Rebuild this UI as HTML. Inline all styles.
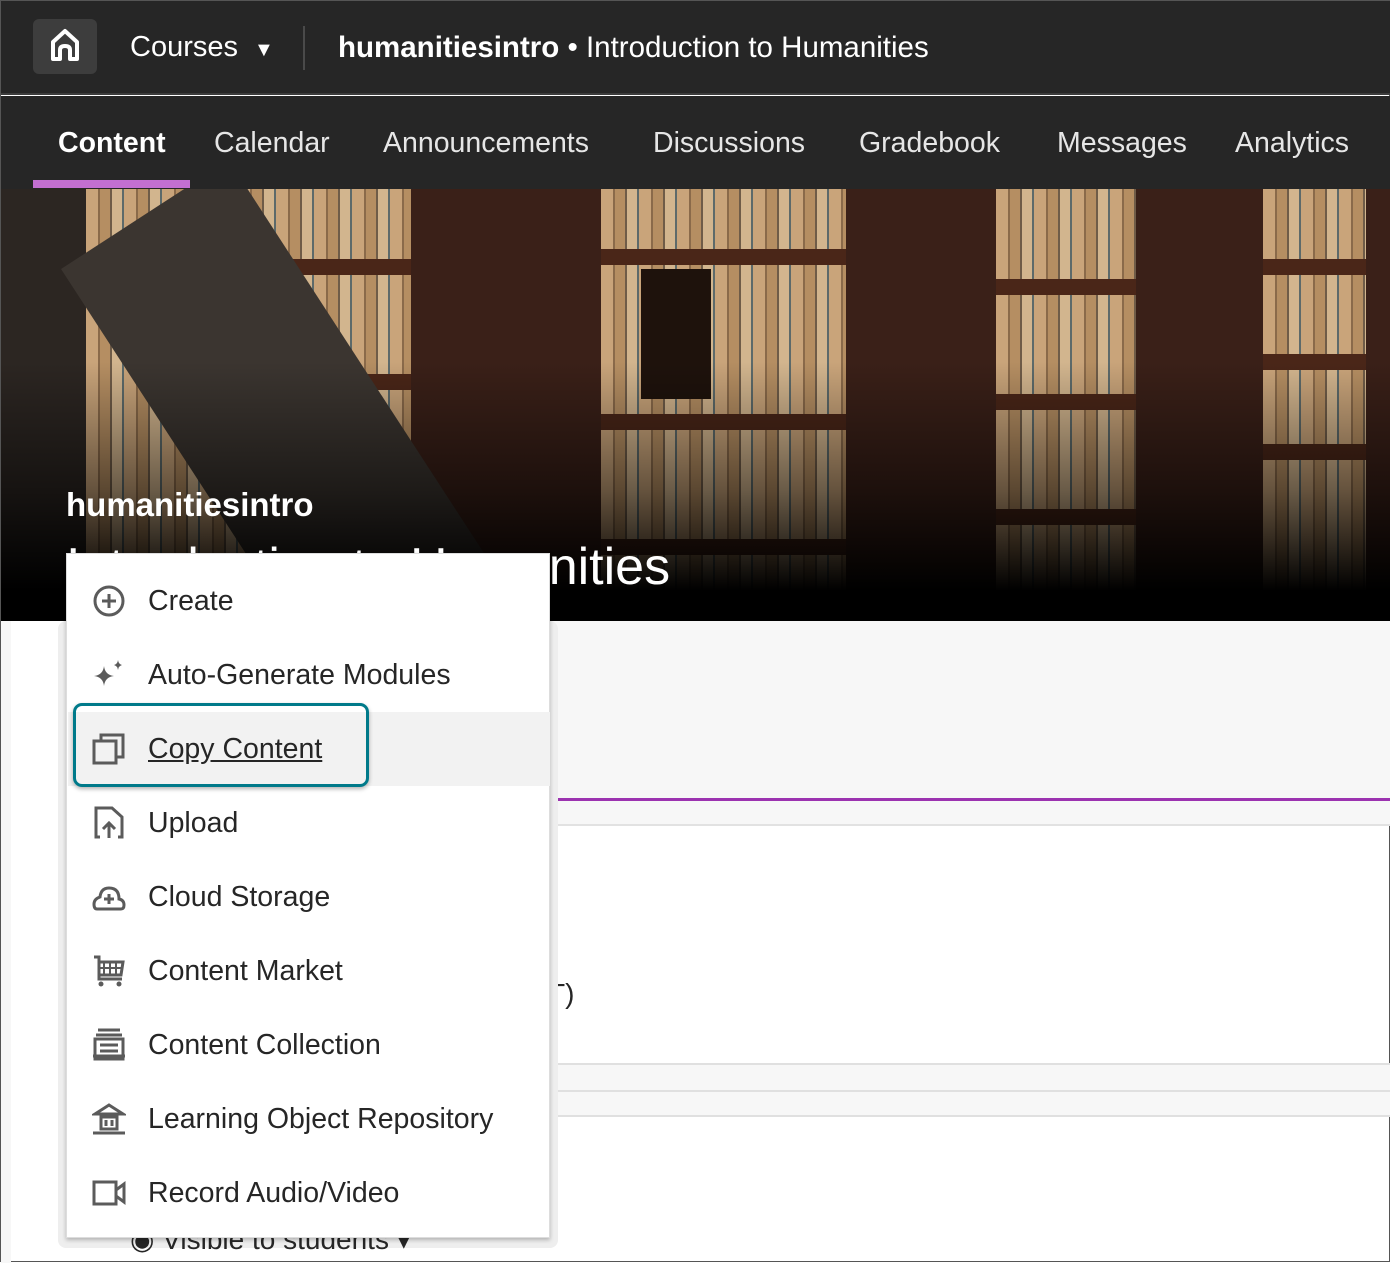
<!DOCTYPE html>
<html><head><meta charset="utf-8"><style>
*{margin:0;padding:0;box-sizing:border-box}
body{width:1390px;height:1262px;overflow:hidden;background:#fff;font-family:"Liberation Sans",sans-serif;position:relative;border:1px solid #555}
.top{position:absolute;left:0;top:0;width:1390px;height:94px;background:#262626;border-bottom:2px solid #3c3c3c}
.home{position:absolute;left:32px;top:18px;width:64px;height:55px;background:#3d3d3d;border-radius:6px}
.courses{position:absolute;left:129px;top:30px;color:#fff;font-size:29px}
.div{position:absolute;left:302px;top:25px;width:2px;height:44px;background:#4a4a4a}
.title{position:absolute;left:337px;top:30px;color:#fff;font-size:29.5px;white-space:nowrap}
.nav{position:absolute;left:0;top:95px;width:1390px;height:94px;background:#262626}
.nav span{position:absolute;top:31px;color:#e6e6e6;font-size:28.5px}
.ul{position:absolute;left:32px;top:179px;width:157px;height:8px;background:#c36fd1}
.hero{position:absolute;left:0;top:188px;width:1390px;height:432px;background:#3a2018;overflow:hidden}
.hero div{position:absolute}
.books{background:repeating-linear-gradient(90deg,#c9a47a 0 12px,#8a6a4a 12px 14px,#b58e62 14px 24px,#6f5c48 24px 26px,#d2b58e 26px 36px,#5d6a6a 36px 38px);}
.shelf{background:#4a2618;height:16px}
.grad{left:0;top:0;width:1390px;height:432px;background:linear-gradient(180deg,rgba(0,0,0,0) 40%,rgba(0,0,0,.5) 70%,#000 93%)}
.h1{position:absolute;left:65px;top:485px;color:#fff;font-size:33px;font-weight:bold}
.h2{position:absolute;left:65px;top:536px;color:#fff;font-size:52px;white-space:nowrap}
.gray{position:absolute;left:549px;top:620px;width:841px;height:178px;background:#f7f7f7}
.purple{position:absolute;left:549px;top:797px;width:841px;height:3px;background:#9c33b0}
.gray2{position:absolute;left:549px;top:800px;width:841px;height:25px;background:#f7f7f7;border-bottom:2px solid #e2e2e2}
.band{position:absolute;left:549px;width:841px;height:27px;background:#f7f7f7;border-top:2px solid #e0e0e0}
.leftpad{position:absolute;left:0;top:620px;width:10px;height:642px;background:#f7f7f7}
.backdrop{position:absolute;left:57px;top:620px;width:500px;height:627px;background:#eee;border-radius:8px}
.menu{position:absolute;left:65px;top:552px;width:484px;height:685px;background:#fff;border:1px solid #ddd;box-shadow:0 2px 4px rgba(0,0,0,.25)}
.item{position:absolute;left:1px;width:482px;height:74px;font-size:28.5px;color:#262626;white-space:nowrap}
.item span{position:absolute;left:80px;top:21px}
.item svg{position:absolute;left:24px;top:20px}
.hl{background:#f2f2f2}
.ring{position:absolute;left:72px;top:702px;width:296px;height:84px;border:3px solid #007a8a;border-radius:9px;box-shadow:0 2px 4px rgba(0,0,0,.3)}
.vis{position:absolute;left:129px;top:1222px;font-size:28px;color:#262626}
</style></head><body>
<div class="top">
 <div class="home"><svg width="64" height="55" viewBox="0 0 64 55"><path d="M20 40V23L32 12L44 23V40H37V31Q37 27 32 27Q27 27 27 31V40Z" fill="none" stroke="#fff" stroke-width="4" stroke-linejoin="round"/></svg></div>
 <div class="courses">Courses <span style="font-size:20px;margin-left:8px">▼</span></div>
 <div class="div"></div>
 <div class="title"><b>humanitiesintro</b> • Introduction to Humanities</div>
</div>
<div class="nav">
 <span style="left:57px;color:#fff;font-weight:bold">Content</span>
 <span style="left:213px">Calendar</span>
 <span style="left:382px">Announcements</span>
 <span style="left:652px">Discussions</span>
 <span style="left:858px">Gradebook</span>
 <span style="left:1056px">Messages</span>
 <span style="left:1234px">Analytics</span>
</div>
<div class="ul"></div>
<div class="hero">
 <div style="left:0;top:0;width:160px;height:432px;background:#2c2622"></div>
 <div class="books" style="left:85px;top:0;width:325px;height:420px"></div>
 <div class="shelf" style="left:200px;top:70px;width:210px"></div>
 <div class="shelf" style="left:220px;top:185px;width:190px"></div>
 <div style="left:60px;top:80px;width:200px;height:600px;background:#3b3530;transform:rotate(-33deg);transform-origin:0 0"></div>
 <div class="books" style="left:600px;top:0;width:245px;height:420px"></div>
 <div class="shelf" style="left:600px;top:60px;width:245px"></div>
 <div class="shelf" style="left:600px;top:225px;width:245px"></div>
 <div class="shelf" style="left:600px;top:350px;width:245px"></div>
 <div style="left:640px;top:80px;width:70px;height:130px;background:#1e120c"></div>
 <div class="books" style="left:995px;top:0;width:140px;height:420px"></div>
 <div class="shelf" style="left:995px;top:90px;width:140px"></div>
 <div class="shelf" style="left:995px;top:205px;width:140px"></div>
 <div class="shelf" style="left:995px;top:320px;width:140px"></div>
 <div class="books" style="left:1262px;top:0;width:103px;height:420px"></div>
 <div class="shelf" style="left:1262px;top:70px;width:103px"></div>
 <div class="shelf" style="left:1262px;top:165px;width:103px"></div>
 <div class="shelf" style="left:1262px;top:255px;width:103px"></div>
 <div class="grad"></div>
</div>
<div class="h1">humanitiesintro</div>
<div class="h2">Introduction to Humanities</div>
<div class="leftpad"></div>
<div class="gray"></div><div class="purple"></div><div class="gray2"></div>
<div style="position:absolute;left:547px;top:977px;font-size:28px;color:#262626">T)</div>
<div class="band" style="top:1062px"></div>
<div class="band" style="top:1089px;border-bottom:2px solid #e0e0e0"></div>
<div class="backdrop"></div>
<div class="vis">◉ Visible to students ▾</div>
<div class="menu">
 <div class="item" style="top:10px"><svg width="34" height="34" viewBox="0 0 34 34"><circle cx="17" cy="17" r="14" fill="none" stroke="#5b5b5b" stroke-width="3"/><path d="M17 10V24M10 17H24" stroke="#5b5b5b" stroke-width="3"/></svg><span>Create</span></div>
 <div class="item" style="top:84px"><svg width="34" height="34" viewBox="0 0 34 34"><path d="M12 8Q13 17 22 18Q13 19 12 28Q11 19 2 18Q11 17 12 8Z" fill="#5b5b5b"/><path d="M26 2Q26.5 6 30 7Q26.5 8 26 12Q25.5 8 22 7Q25.5 6 26 2Z" fill="#5b5b5b"/></svg><span>Auto-Generate Modules</span></div>
 <div class="item hl" style="top:158px"><svg width="34" height="34" viewBox="0 0 34 34"><rect x="2" y="9" width="22" height="22" fill="none" stroke="#5b5b5b" stroke-width="3"/><path d="M9 9V3H31V25H24" fill="none" stroke="#5b5b5b" stroke-width="3"/></svg><span style="text-decoration:underline">Copy Content</span></div>
 <div class="item" style="top:232px"><svg width="34" height="34" viewBox="0 0 34 34"><path d="M8 31H4V2H20L30 11V31H26" fill="none" stroke="#5b5b5b" stroke-width="3"/><path d="M17 32V18M11 23L17 17L23 23" fill="none" stroke="#5b5b5b" stroke-width="3"/></svg><span>Upload</span></div>
 <div class="item" style="top:306px"><svg width="34" height="34" viewBox="0 0 34 34"><path d="M5 29H29Q32 29 32 25Q32 20 27 19Q27 8 17 8Q9 8 8 17Q2 19 2 24Q2 29 5 29Z" fill="none" stroke="#5b5b5b" stroke-width="3"/><path d="M17 14V24M12 19H22" stroke="#5b5b5b" stroke-width="3"/></svg><span>Cloud Storage</span></div>
 <div class="item" style="top:380px"><svg width="34" height="34" viewBox="0 0 34 34"><path d="M2 3H7V25H30M7 8H31L29 21H7" fill="none" stroke="#5b5b5b" stroke-width="3"/><path d="M12 8V21M18 8V21M24 8V21M7 14H30" stroke="#5b5b5b" stroke-width="2"/><circle cx="9" cy="30" r="2.5" fill="#5b5b5b"/><circle cx="27" cy="30" r="2.5" fill="#5b5b5b"/></svg><span>Content Market</span></div>
 <div class="item" style="top:454px"><svg width="34" height="34" viewBox="0 0 34 34"><path d="M6 2H28M4 7H30" stroke="#5b5b5b" stroke-width="3"/><rect x="3" y="11" width="28" height="20" fill="none" stroke="#5b5b5b" stroke-width="3"/><path d="M8 17H26M8 23H26M1 28H33" stroke="#5b5b5b" stroke-width="3"/></svg><span>Content Collection</span></div>
 <div class="item" style="top:528px"><svg width="34" height="34" viewBox="0 0 34 34"><path d="M3 12L17 3L31 12H3Z" fill="none" stroke="#5b5b5b" stroke-width="3"/><rect x="9" y="15" width="16" height="12" fill="none" stroke="#5b5b5b" stroke-width="3"/><path d="M14 18V24M20 18V24M1 31H33" stroke="#5b5b5b" stroke-width="3"/></svg><span>Learning Object Repository</span></div>
 <div class="item" style="top:602px"><svg width="34" height="34" viewBox="0 0 34 34"><rect x="2" y="6" width="22" height="22" fill="none" stroke="#5b5b5b" stroke-width="3"/><path d="M24 14L32 8V26L24 20" fill="none" stroke="#5b5b5b" stroke-width="3"/></svg><span>Record Audio/Video</span></div>
</div>
<div class="ring"></div>
</body></html>
